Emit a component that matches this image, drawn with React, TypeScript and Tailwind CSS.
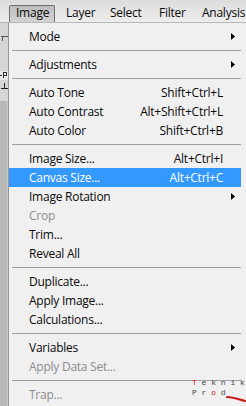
import React from "react";

type Item =
  | { kind: "sep" }
  | { kind: "item"; label: string; shortcut?: string; arrow?: boolean; disabled?: boolean; active?: boolean };

const items: Item[] = [
  { kind: "item", label: "Mode", arrow: true },
  { kind: "sep" },
  { kind: "item", label: "Adjustments", arrow: true },
  { kind: "sep" },
  { kind: "item", label: "Auto Tone", shortcut: "Shift+Ctrl+L" },
  { kind: "item", label: "Auto Contrast", shortcut: "Alt+Shift+Ctrl+L" },
  { kind: "item", label: "Auto Color", shortcut: "Shift+Ctrl+B" },
  { kind: "sep" },
  { kind: "item", label: "Image Size...", shortcut: "Alt+Ctrl+I" },
  { kind: "item", label: "Canvas Size...", shortcut: "Alt+Ctrl+C", active: true },
  { kind: "item", label: "Image Rotation", arrow: true },
  { kind: "item", label: "Crop", disabled: true },
  { kind: "item", label: "Trim..." },
  { kind: "item", label: "Reveal All" },
  { kind: "sep" },
  { kind: "item", label: "Duplicate..." },
  { kind: "item", label: "Apply Image..." },
  { kind: "item", label: "Calculations..." },
  { kind: "sep" },
  { kind: "item", label: "Variables", arrow: true },
  { kind: "item", label: "Apply Data Set...", disabled: true },
  { kind: "sep" },
  { kind: "item", label: "Trap...", disabled: true },
];

function Arrow() {
  return (
    <svg width="4" height="7" viewBox="0 0 4 7" className="block">
      <path d="M0 0 L4 3.5 L0 7 Z" fill="#000" />
    </svg>
  );
}

export default function App() {
  return (
    <div className="relative w-[246px] h-[406px] overflow-hidden bg-[#f0f0f0] font-['Open_Sans',sans-serif] text-[12px] tracking-[-0.25px] leading-none text-[#0a0a0a]">
      {/* menu bar */}
      <div className="h-[23px] flex items-end pl-[9px] bg-gradient-to-b from-[#dcdcdc] to-[#ededed] border-b border-[#b8b8b8] whitespace-nowrap">
        <div className="h-[17px] w-[46px] pl-[6px] flex items-center border border-b-0 border-[#6f6f6f] rounded-t-[2px] bg-gradient-to-b from-[#bdbdbd] to-[#d4d4d4] pb-[2px]">
          Image
        </div>
        <div className="h-[17px] w-[44px] ml-[11px] flex items-center pb-[2px]">Layer</div>
        <div className="h-[17px] w-[49px] flex items-center pb-[2px]">Select</div>
        <div className="h-[17px] w-[43px] flex items-center pb-[2px]">Filter</div>
        <div className="h-[17px] flex items-center pb-[2px]">Analysis</div>
      </div>

      <div className="flex h-[383px]">
        {/* left strip (background app) */}
        <div className="w-[8px] flex flex-col">
          <div className="h-[78px] bg-[#d6d6d6] relative">
            <div className="absolute left-[1px] top-[13px] w-[7px] h-[1px] bg-[#555]" />
            <div className="absolute left-[2px] top-[13px] w-[1px] h-[5px] bg-[#555]" />
            <div className="absolute left-[0px] top-[48px] w-[8px] h-[9px] bg-[#e9e9e9]" />
            <div className="absolute left-[3px] top-[49px] w-[1px] h-[6px] bg-[#333]" />
            <div className="absolute left-[3px] top-[49px] w-[4px] h-[1px] bg-[#333]" />
            <div className="absolute left-[6px] top-[49px] w-[1px] h-[3px] bg-[#333]" />
            <div className="absolute left-[3px] top-[52px] w-[4px] h-[1px] bg-[#333]" />
            <div className="absolute left-[0px] top-[52px] w-[2px] h-[1px] bg-[#333]" />
            <div className="absolute left-[4px] top-[60px] w-[1px] h-[5px] bg-[#222]" />
            <div className="absolute left-[1px] top-[65px] w-[7px] h-[1px] bg-[#222]" />
          </div>
          <div className="flex-1 bg-[#b9b9b9] border-r border-[#c9c9c9]" />
        </div>

        {/* dropdown menu */}
        <div className="flex-1 border-l border-[#979797] bg-[#f0f0f0] pt-[4px]">
          {items.map((it, i) =>
            it.kind === "sep" ? (
              <div key={i} className="h-[9px] flex items-center pl-[3px] pr-[5px]">
                <div className="h-[1px] w-full bg-[#a0a0a0]" />
              </div>
            ) : (
              <div
                key={i}
                className={
                  "h-[19px] flex items-center mr-[5px] pl-[20px] " +
                  (it.arrow ? "pr-[6px] " : "pr-[18px] ") +
                  (it.active ? "bg-[#3399ff] text-white " : "") +
                  (it.disabled ? "text-[#8d8d8d] " : "")
                }
              >
                <span className="whitespace-nowrap">{it.label}</span>
                {it.shortcut && <span className="ml-auto whitespace-nowrap">{it.shortcut}</span>}
                {it.arrow && (
                  <span className="ml-auto">
                    <Arrow />
                  </span>
                )}
              </div>
            )
          )}
        </div>
      </div>

      {/* watermark */}
      <div className="absolute left-[192px] top-[378px] font-['Liberation_Mono',monospace] text-[8px] leading-[10px] tracking-normal">
        <div className="whitespace-pre">
          <span className="text-[#d42020]">T</span>
          <span className="text-[#444]"> e k n i k</span>
        </div>
        <div className="whitespace-pre">
          <span className="text-[#444]">P r </span>
          <span className="text-[#d42020]">o</span>
          <span className="text-[#444]"> d</span>
        </div>
      </div>
      <svg className="absolute left-[226px] top-[394px]" width="20" height="10" viewBox="0 0 20 10">
        <path d="M1 3 C6 3, 12 5, 19 7" stroke="#cc1a1a" strokeWidth="2.2" fill="none" strokeLinecap="round" />
      </svg>
    </div>
  );
}
